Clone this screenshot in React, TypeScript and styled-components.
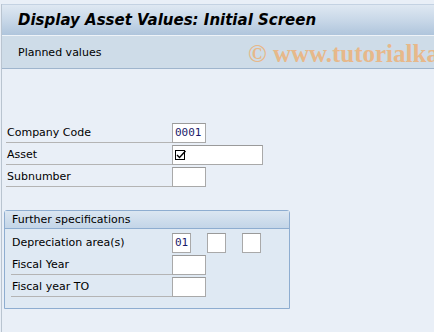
import React from "react";
import styled, { createGlobalStyle } from "styled-components";

const GlobalStyle = createGlobalStyle`
  body {
    margin: 0;
    font-family: "DejaVu Sans", Tahoma, sans-serif;
  }
`;

const Screen = styled.div`
  width: 434px;
  height: 332px;
  background: #e9eff7;
  padding-top: 4px;
  box-sizing: border-box;
  overflow: hidden;
`;

const Frame = styled.div`
  border-left: 1px solid #b9c4d0;
  margin-left: 1px;
  height: 100%;
`;

const TitleBar = styled.div`
  height: 30px;
  border-top: 1px solid #c4d2e2;
  background: linear-gradient(180deg, #dfe8f2 0%, #c6d6e7 55%, #afc5dc 100%);
  display: flex;
  align-items: center;
  padding-left: 16px;
`;

const Title = styled.h1`
  margin: 0;
  font-family: "DejaVu Sans", Verdana, sans-serif;
  font-size: 15px;
  font-weight: bold;
  font-style: italic;
  color: #000;
`;

const Toolbar = styled.div`
  height: 32px;
  border-top: 1px solid #eef3f8;
  border-bottom: 1px solid #9fb5cd;
  background: #cedce8;
  display: flex;
  align-items: center;
  padding-left: 16px;
  position: relative;
  overflow: hidden;
`;

const ToolText = styled.span`
  font-size: 11px;
  color: #000;
`;

const Watermark = styled.span`
  position: absolute;
  left: 246px;
  top: 4px;
  font-family: "Liberation Serif", serif;
  font-size: 25px;
  font-weight: bold;
  color: #e7b88a;
  white-space: nowrap;
`;

const Body = styled.div`
  padding-top: 53px;
`;

const Fields = styled.div`
  display: flex;
  flex-direction: column;
  padding-left: 4px;
`;

const Row = styled.div`
  display: flex;
  align-items: center;
  height: 22px;
`;

const Label = styled.div<{ $w: number; $line?: boolean }>`
  width: ${(p) => p.$w}px;
  height: 20px;
  box-sizing: border-box;
  padding-left: 1px;
  font-size: 11px;
  line-height: 19px;
  color: #000;
  border-bottom: 1px solid ${(p) => (p.$line === false ? "transparent" : "#b4b4b4")};
`;

const Input = styled.div<{ $w: number; $ml?: number }>`
  width: ${(p) => p.$w}px;
  height: 20px;
  margin-left: ${(p) => p.$ml ?? 0}px;
  box-sizing: border-box;
  background: #fff;
  border: 1px solid #a9a9a9;
  border-top-color: #9a9a9a;
  font-family: "DejaVu Sans Mono", monospace;
  font-size: 11px;
  line-height: 18px;
  padding-left: 2px;
  color: #1a1a6a;
  display: flex;
  align-items: center;
`;

const Group = styled.div`
  margin: 22px 0 0 2px;
  width: 286px;
  box-sizing: border-box;
  border: 1px solid #8eadd0;
  border-radius: 3px 3px 0 0;
  background: #dfe9f3;
  padding-bottom: 10px;
`;

const GroupHead = styled.div`
  height: 17px;
  border-bottom: 1px solid #8eadd0;
  background: linear-gradient(180deg, #dbe6f1 0%, #c3d5e8 100%);
  padding-left: 7px;
  font-size: 11px;
  line-height: 17px;
  color: #000;
`;

const GroupRows = styled.div`
  padding: 3px 0 0 6px;
  display: flex;
  flex-direction: column;
`;

const Check = () => (
  <svg width="11" height="11" viewBox="0 0 11 11">
    <rect x="0.5" y="0.5" width="9" height="9" fill="none" stroke="#000" />
    <path d="M2 5 L4.5 7.5 L10.5 1" fill="none" stroke="#000" strokeWidth="1.4" />
  </svg>
);

export default function App() {
  return (
    <>
      <GlobalStyle />
      <Screen>
        <Frame>
          <TitleBar>
            <Title>Display Asset Values: Initial Screen</Title>
          </TitleBar>
          <Toolbar>
            <ToolText>Planned values</ToolText>
            <Watermark>© www.tutorialka</Watermark>
          </Toolbar>
          <Body>
            <Fields>
              <Row>
                <Label $w={166}>Company Code</Label>
                <Input $w={34}>0001</Input>
              </Row>
              <Row>
                <Label $w={166}>Asset</Label>
                <Input $w={91}>
                  <Check />
                </Input>
              </Row>
              <Row>
                <Label $w={166}>Subnumber</Label>
                <Input $w={34} />
              </Row>
            </Fields>
            <Group>
              <GroupHead>Further specifications</GroupHead>
              <GroupRows>
                <Row>
                  <Label $w={161} $line={false}>Depreciation area(s)</Label>
                  <Input $w={19}>01</Input>
                  <Input $w={19} $ml={16} />
                  <Input $w={19} $ml={16} />
                </Row>
                <Row>
                  <Label $w={161}>Fiscal Year</Label>
                  <Input $w={34} />
                </Row>
                <Row>
                  <Label $w={161}>Fiscal year TO</Label>
                  <Input $w={34} />
                </Row>
              </GroupRows>
            </Group>
          </Body>
        </Frame>
      </Screen>
    </>
  );
}
